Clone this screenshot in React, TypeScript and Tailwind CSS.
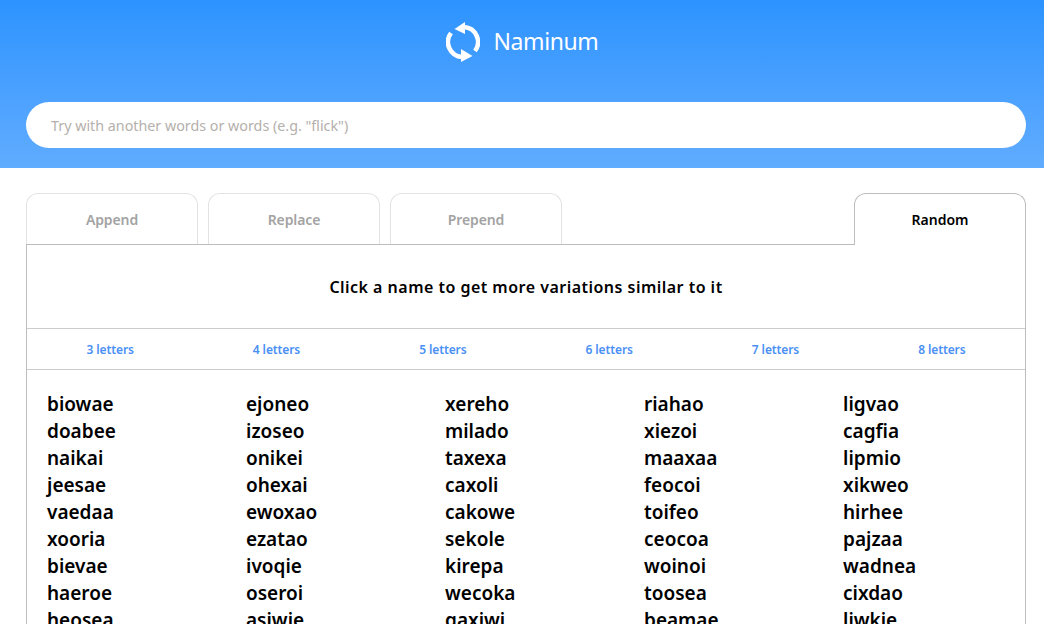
import React from 'react';

const lengths = ['3 letters', '4 letters', '5 letters', '6 letters', '7 letters', '8 letters'];

const names = [
  ['biowae', 'doabee', 'naikai', 'jeesae', 'vaedaa', 'xooria', 'bievae', 'haeroe', 'heosea'],
  ['ejoneo', 'izoseo', 'onikei', 'ohexai', 'ewoxao', 'ezatao', 'ivoqie', 'oseroi', 'asiwie'],
  ['xereho', 'milado', 'taxexa', 'caxoli', 'cakowe', 'sekole', 'kirepa', 'wecoka', 'gaxiwi'],
  ['riahao', 'xiezoi', 'maaxaa', 'feocoi', 'toifeo', 'ceocoa', 'woinoi', 'toosea', 'beamae'],
  ['ligvao', 'cagfia', 'lipmio', 'xikweo', 'hirhee', 'pajzaa', 'wadnea', 'cixdao', 'liwkie'],
];

const Logo = () => (
  <svg width="34" height="40" viewBox="0 0 34 40" fill="none" className="block">
    <path d="M18 5.030A15 15 0 0 1 29 29" stroke="white" strokeWidth="4.500" />
    <path d="M16 34.970A15 15 0 0 1 5 11" stroke="white" strokeWidth="4.500" />
    <path d="M19 0v12L8.500 7z" fill="white" />
    <path d="M15 27v13l11.500-6z" fill="white" />
  </svg>
);

const Tab = ({ label }: { label: string }) => (
  <button className="w-[172px] h-[51px] pt-px -mb-px rounded-t-xl border border-b-0 border-[#e3e3e3] bg-white text-sm font-semibold tracking-[-0.1px] text-[#a3a3a3]">
    {label}
  </button>
);

export default function App() {
  return (
    <div className="h-screen overflow-hidden bg-white font-['Noto_Sans',sans-serif]">
      <header className="h-[168px] bg-gradient-to-b from-[#2b93ff] to-[#60acff]">
        <div className="h-[102px] flex items-start justify-center pt-[22px] gap-[14px]">
          <Logo />
          <span className="-mt-px text-[23px] leading-[40px] tracking-[-0.4px] text-white">Naminum</span>
        </div>
        <div className="ml-[26px] mr-[18px] h-[46px] rounded-full bg-white pl-[25px] pt-0.5 flex items-center">
          <input
            className="w-full bg-transparent outline-none text-[14.3px] placeholder:text-[#b4b0ac]"
            placeholder={'Try with another words or words (e.g. "flick")'}
          />
        </div>
      </header>

      <main className="pl-[26px] pr-[18px] pt-[25px]">
        <div className="flex gap-2.5 relative z-10">
          <Tab label="Append" />
          <Tab label="Replace" />
          <Tab label="Prepend" />
          <button className="ml-auto w-[172px] h-[52px] -mb-px rounded-t-xl border border-b-0 border-[#bdbdbd] bg-white text-sm font-semibold text-black">
            Random
          </button>
        </div>
        <section className="border border-[#bdbdbd]">
          <h1 className="h-[84px] flex items-center justify-center text-base tracking-[0.48px] font-semibold text-black border-b border-[#cccccc]">
            Click a name to get more variations similar to it
          </h1>
          <div className="h-[41px] grid grid-cols-6 items-center border-b border-[#cccccc]">
            {lengths.map((l) => (
              <a key={l} href="#" className="pt-px text-center text-xs font-semibold tracking-[-0.1px] text-[#4a90f5]">
                {l}
              </a>
            ))}
          </div>
          <div className="flex pl-5 pt-[21px]">
            {names.map((col) => (
              <ul key={col[0]} className="w-[199px] shrink-0">
                {col.map((n) => (
                  <li key={n} className="text-[19px] leading-[27px] font-semibold text-black">
                    {n}
                  </li>
                ))}
              </ul>
            ))}
          </div>
        </section>
      </main>
    </div>
  );
}
